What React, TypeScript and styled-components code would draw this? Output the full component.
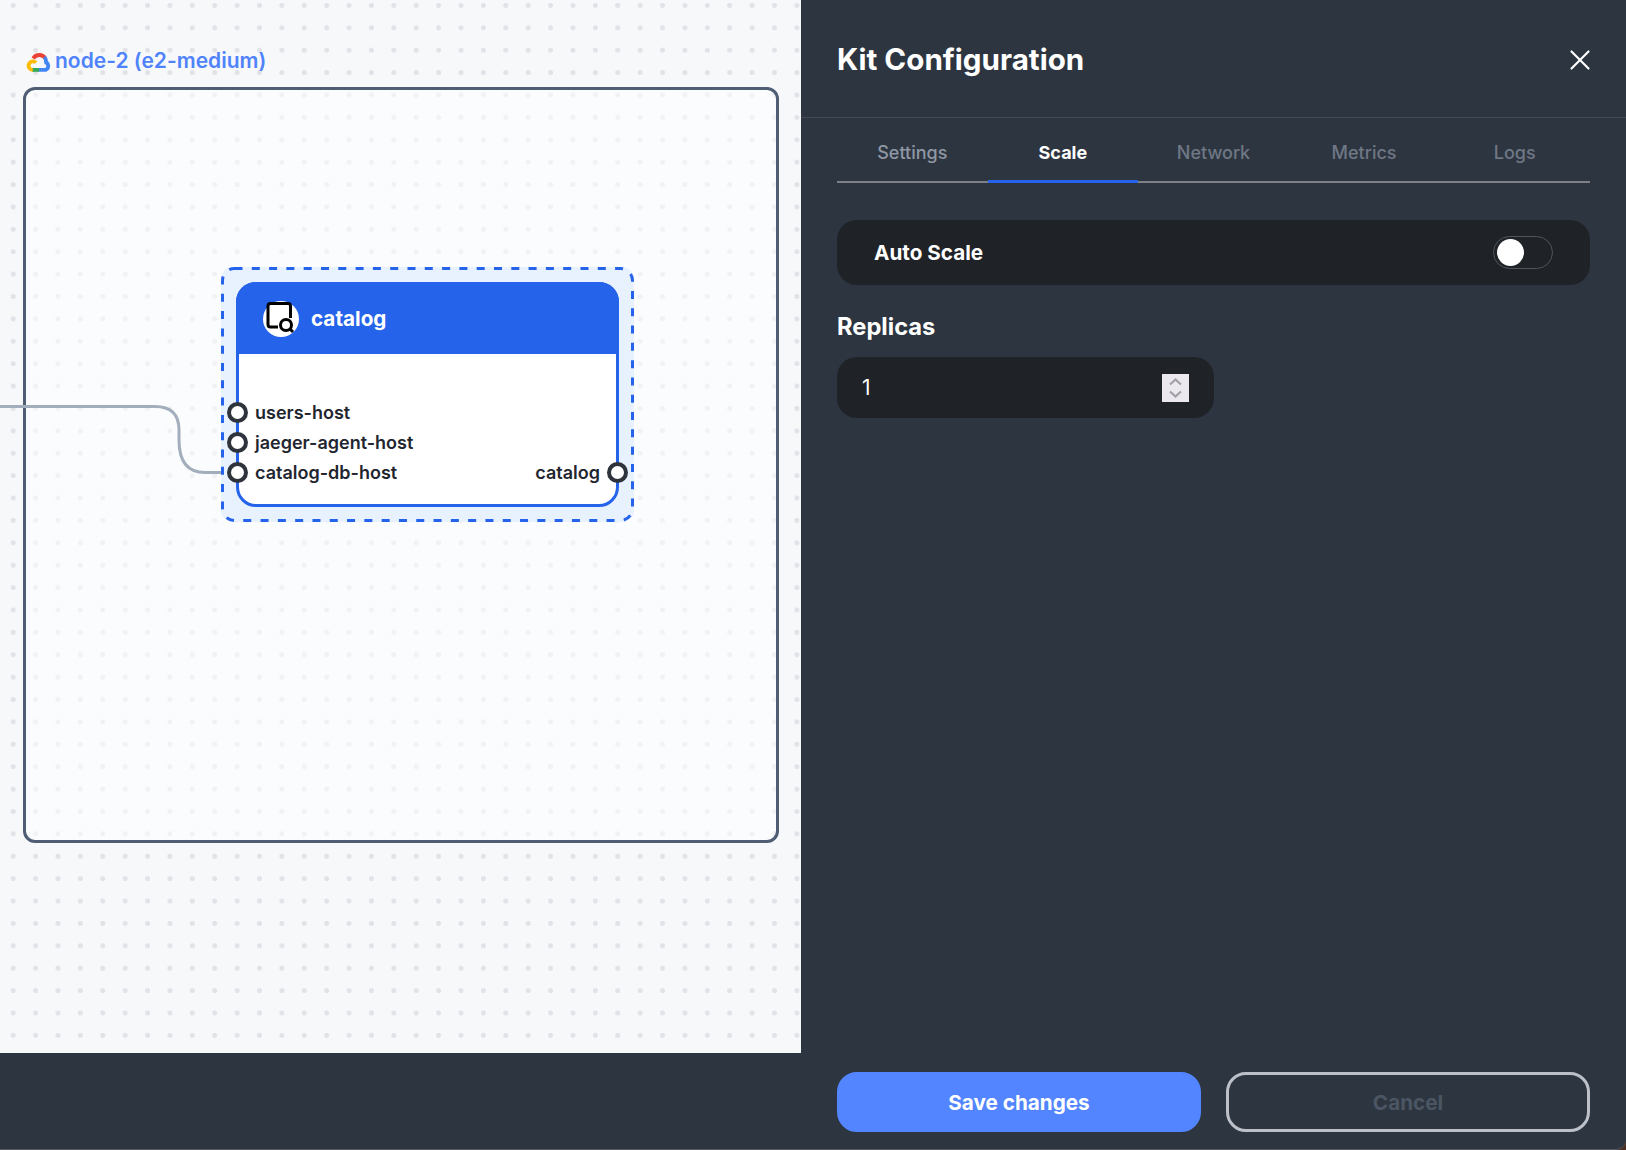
import React from 'react';
import styled, { createGlobalStyle, css } from 'styled-components';
import { X } from 'lucide-react';

const GlobalStyle = createGlobalStyle`
  html, body {
    margin: 0;
    padding: 0;
    height: 100%;
    background: #4a2e24;
    font-family: Inter, "Liberation Sans", sans-serif;
    overflow: hidden;
  }

  * {
    box-sizing: border-box;
  }
`;

const Page = styled.div`
  display: flex;
  width: 1626px;
  height: 1150px;
  overflow: hidden;
  background: #2d3540;
  border-bottom: 1px solid #565b63;
  border-radius: 0 0 10px 0;
`;

const Left = styled.div`
  display: flex;
  flex-direction: column;
  width: 801px;
  flex: none;
`;

const Canvas = styled.div`
  position: relative;
  height: 1053px;
  overflow: hidden;
  background-color: #f7f8fa;
  background-image: radial-gradient(circle, #e1e3e8 2.2px, transparent 2.8px);
  background-size: 22.4px 22.4px;
  background-position: 2px 39px;
`;

const BottomBar = styled.div`
  flex: 1;
`;

const MachineLabel = styled.div`
  position: absolute;
  left: 26px;
  top: 47px;
  display: flex;
  align-items: center;
  gap: 4px;
  color: #4f83fb;
  font-size: 21px;
  font-weight: 600;
  line-height: 28px;
  white-space: nowrap;
`;

const MachineBox = styled.div`
  position: absolute;
  left: 23px;
  top: 87px;
  width: 756px;
  height: 756px;
  border: 3px solid #4f5d75;
  border-radius: 12px;
  background: rgba(255, 255, 255, 0.55);
`;

const Selection = styled.div`
  position: absolute;
  left: 221px;
  top: 267px;
  width: 413px;
  height: 255px;
  border-radius: 12px;
  background: #e8f1fe;
`;

const DashedOutline = styled.svg`
  position: absolute;
  inset: 0;
`;

const Node = styled.div`
  position: absolute;
  left: 236px;
  top: 282px;
  width: 383px;
  height: 225px;
  display: flex;
  flex-direction: column;
  border: 3px solid #2563eb;
  border-radius: 20px;
  background: #fff;
`;

const NodeHeader = styled.div`
  display: flex;
  align-items: center;
  gap: 12px;
  height: 72px;
  margin: -3px -3px 0;
  padding: 0 0 0 27px;
  border-radius: 20px 20px 0 0;
  background: #2563eb;
  color: #fff;
  font-size: 20.7px;
  font-weight: 700;
`;

const NodeIcon = styled.div`
  display: flex;
  width: 36px;
  height: 36px;
  margin-top: 2px;
  border-radius: 50%;
  background: #fff;
`;

const PortList = styled.div`
  display: grid;
  grid-template-columns: 1fr auto;
  grid-auto-rows: 30px;
  align-content: end;
  flex: 1;
  padding-bottom: 17px;
`;

const PortLabel = styled.div<{ $right?: boolean }>`
  position: relative;
  display: flex;
  align-items: center;
  color: #1f2630;
  font-size: 18px;
  font-weight: 600;
  white-space: nowrap;
  padding-left: 16px;

  ${({ $right }) => $right && css`
    grid-column: 2;
    padding: 0 16px 0 0;
  `}
`;

const Port = styled.span<{ $right?: boolean }>`
  position: absolute;
  top: 5px;
  width: 21px;
  height: 21px;
  border: 4px solid #2f343c;
  border-radius: 50%;
  background: #fff;
  ${({ $right }) => ($right ? css`right: -12px;` : css`left: -12px;`)}
`;

const Wire = styled.svg`
  position: absolute;
  left: 0;
  top: 390px;
`;

const Panel = styled.aside`
  display: flex;
  flex-direction: column;
  flex: 1;
`;

const PanelHeader = styled.header`
  display: flex;
  align-items: center;
  justify-content: space-between;
  height: 118px;
  padding: 0 29px 0 36px;
  border-bottom: 1px solid #454b55;
`;

const Title = styled.h1`
  margin: 0;
  color: #fff;
  font-size: 29.6px;
  font-weight: 700;
`;

const CloseButton = styled.button`
  display: flex;
  margin-top: 2px;
  padding: 0;
  border: 0;
  background: none;
  color: #fff;
`;

const Tabs = styled.nav`
  display: flex;
  margin: 0 36px;
  height: 65px;
  border-bottom: 2px solid #7d8087;
`;

const Tab = styled.div<{ $active?: boolean; $first?: boolean }>`
  flex: 1;
  display: flex;
  align-items: center;
  justify-content: center;
  margin-bottom: -2px;
  padding-top: 7px;
  border-bottom: 3px solid transparent;
  color: ${({ $first }) => ($first ? '#8f97a5' : '#6f7785')};
  font-size: 18px;
  font-weight: 500;

  ${({ $active }) => $active && css`
    border-bottom-color: #2563eb;
    color: #fff;
    font-weight: 700;
  `}
`;

const Body = styled.div`
  display: flex;
  flex-direction: column;
  flex: 1;
  padding: 37px 36px 0;
`;

const Row = styled.div`
  display: flex;
  align-items: center;
  justify-content: space-between;
  height: 65px;
  padding: 0 37px;
  border-radius: 20px;
  background: #1f2226;
  color: #fff;
  font-size: 20.7px;
  font-weight: 700;
`;

const Toggle = styled.div`
  display: flex;
  align-items: center;
  width: 60px;
  height: 33px;
  padding: 0 3px;
  border: 1px solid #50555d;
  border-radius: 17px;
`;

const Knob = styled.span`
  width: 27px;
  height: 27px;
  border-radius: 50%;
  background: #fff;
`;

const FieldLabel = styled.label`
  margin: 26px 0 14px;
  color: #fff;
  font-size: 23.7px;
  font-weight: 700;
  line-height: 32px;
`;

const NumberField = styled.div`
  display: flex;
  align-items: center;
  justify-content: space-between;
  width: 377px;
  height: 61px;
  padding: 0 25px;
  border-radius: 20px;
  background: #1f2226;
  color: #fff;
  font-size: 21px;
`;

const Spinner = styled.svg`
  display: block;
  background: #ebe9ed;
`;

const Footer = styled.footer`
  display: flex;
  gap: 25px;
  padding: 0 36px 17px;
`;

const FooterButton = styled.button<{ $primary?: boolean }>`
  flex: 1;
  height: 60px;
  border: 3px solid #bcc0c9;
  border-radius: 20px;
  background: none;
  color: #4b5563;
  font-family: inherit;
  font-size: 20.7px;
  font-weight: 700;

  ${({ $primary }) => $primary && css`
    border-color: #5285ff;
    background: #5285ff;
    color: #fff;
  `}
`;

function GoogleCloudIcon(): JSX.Element {
  return (
    <svg width="25" height="21" viewBox="0 0 25 21" fill="none" strokeWidth="3.8">
      <path d="M7.2 7.5 A7 7 0 0 1 19.4 7.6" stroke="#ea4335" />
      <path d="M18.4 6 A7 7 0 0 1 20 11.5" stroke="#4285f4" />
      <path d="M18.5 11 A4.1 4.1 0 0 1 19.6 18.9 L12.5 18.9" stroke="#4285f4" />
      <path d="M13 18.9 L6 18.9" stroke="#34a853" />
      <path d="M6.8 18.9 A4.3 4.3 0 1 1 10 11.6" stroke="#fbbc05" />
    </svg>
  );
}

function CatalogIcon(): JSX.Element {
  return (
    <svg width="36" height="36" viewBox="0 0 36 36" fill="none" stroke="#000" strokeWidth="3">
      <path d="M15 26 H7.5 Q5 26 5 23.5 V5 Q5 2.5 7.5 2.5 H25 Q27.5 2.5 27.5 5 V17" />
      <circle cx="23" cy="24" r="5.5" />
      <path d="M27 28 L30 31" />
    </svg>
  );
}

const inputs = ['users-host', 'jaeger-agent-host'];
const tabs = ['Settings', 'Scale', 'Network', 'Metrics', 'Logs'];

export default function App(): JSX.Element {
  return (
    <Page>
      <GlobalStyle />
      <Left>
        <Canvas>
          <MachineLabel>
            <GoogleCloudIcon />
            node-2 (e2-medium)
          </MachineLabel>
          <MachineBox />
          <Wire width="240" height="90" viewBox="0 0 240 90" fill="none">
            <path d="M0 16.5 H155 Q179 16.5 179 40 V50 Q179 82.5 205 82.5 H225" stroke="#a3aebd" strokeWidth="3" />
          </Wire>
          <Selection>
            <DashedOutline width="413" height="255" viewBox="0 0 413 255" fill="none">
              <rect x="1.5" y="1.5" width="410" height="252" rx="12" stroke="#2563eb" strokeWidth="3" strokeDasharray="8 9.3" />
            </DashedOutline>
          </Selection>
          <Node>
            <NodeHeader>
              <NodeIcon><CatalogIcon /></NodeIcon>
              catalog
            </NodeHeader>
            <PortList>
              {inputs.map((name) => (
                <React.Fragment key={name}>
                  <PortLabel>
                    <Port />
                    {name}
                  </PortLabel>
                  <div />
                </React.Fragment>
              ))}
              <PortLabel>
                <Port />
                catalog-db-host
              </PortLabel>
              <PortLabel $right>
                catalog
                <Port $right />
              </PortLabel>
            </PortList>
          </Node>
        </Canvas>
        <BottomBar />
      </Left>
      <Panel>
        <PanelHeader>
          <Title>Kit Configuration</Title>
          <CloseButton><X size={34} strokeWidth={1.5} /></CloseButton>
        </PanelHeader>
        <Tabs>
          {tabs.map((tab, index) => (
            <Tab key={tab} $active={tab === 'Scale'} $first={index === 0}>{tab}</Tab>
          ))}
        </Tabs>
        <Body>
          <Row>
            Auto Scale
            <Toggle><Knob /></Toggle>
          </Row>
          <FieldLabel>Replicas</FieldLabel>
          <NumberField>
            1
            <Spinner width="27" height="28" viewBox="0 0 27 28" fill="none" stroke="#a19fa8" strokeWidth="2.2">
              <path d="M8 10.5 L13.5 5.5 L19 10.5" />
              <path d="M8 17.5 L13.5 22.5 L19 17.5" />
            </Spinner>
          </NumberField>
        </Body>
        <Footer>
          <FooterButton $primary>Save changes</FooterButton>
          <FooterButton>Cancel</FooterButton>
        </Footer>
      </Panel>
    </Page>
  );
}
